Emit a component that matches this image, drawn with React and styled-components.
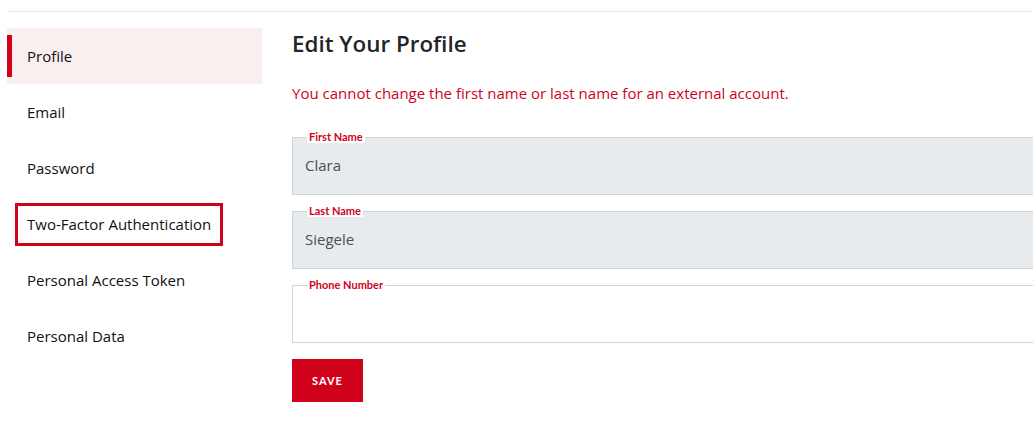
import styled, { createGlobalStyle } from "styled-components";

const GlobalStyle = createGlobalStyle`
  html, body {
    margin: 0;
    padding: 0;
    background: #fff;
    overflow: hidden;
  }
  body {
    font-family: "Open Sans", "Noto Sans", sans-serif;
    color: #212529;
  }
`;

const Page = styled.div`
  padding: 11px 0 0 7px;
`;

const Layout = styled.div`
  border-top: 1px solid #e5e5e5;
  padding-top: 16px;
  display: flex;
  gap: 30px;
`;

const Sidebar = styled.nav`
  width: 255px;
  flex-shrink: 0;
  display: flex;
  flex-direction: column;
`;

const NavItem = styled.a`
  position: relative;
  display: flex;
  align-items: center;
  height: 56px;
  padding-left: 20px;
  font-size: 15px;
  color: #111;
  text-decoration: none;
  background: ${(p) => (p.$active ? "#f9efee" : "transparent")};

  &::before {
    content: "";
    display: ${(p) => (p.$active ? "block" : "none")};
    position: absolute;
    left: 0;
    top: 7px;
    bottom: 7px;
    width: 5px;
    background: #d0021b;
  }
`;

const Focus = styled.span`
  margin-left: -12px;
  padding: 8px 9px 9px 9px;
  border: 3px solid #d0021b;
  line-height: 20px;
`;

const Main = styled.main`
  flex: 1;
  min-width: 0;
`;

const Title = styled.h1`
  margin: 1px 0 0;
  font-size: 22.4px;
  font-weight: 600;
  line-height: 30px;
  color: #212529;
`;

const Notice = styled.p`
  margin: 24px 0 28px;
  font-size: 15px;
  line-height: 20px;
  color: #d0021b;
`;

const Form = styled.form`
  width: 780px;
`;

const Field = styled.fieldset`
  margin: 0 0 10px;
  padding: 0 12px 7px;
  border: 1px solid #ced4da;
  background: ${(p) => (p.$disabled ? "#e8ebee" : "#fff")};
`;

const Legend = styled.legend`
  padding: 0 2px;
  margin-left: 2px;
  font-family: Lato, sans-serif;
  font-weight: 700;
  font-size: 11px;
  line-height: 12px;
  color: #d0021b;
  background: #fff;
`;

const Input = styled.input`
  display: block;
  width: 100%;
  height: 44px;
  border: 0;
  padding: 0;
  background: transparent;
  font-family: "Open Sans", "Noto Sans", sans-serif;
  font-size: 15px;
  color: #495057;
  outline: none;
`;

const SaveButton = styled.button`
  margin-top: 6px;
  width: 71px;
  height: 43px;
  border: 0;
  background: #d0021b;
  color: #fff;
  font-family: Lato, sans-serif;
  font-weight: 700;
  font-size: 11px;
  letter-spacing: 1px;
  cursor: pointer;
`;

const navItems = [
  "Profile",
  "Email",
  "Password",
  "Two-Factor Authentication",
  "Personal Access Token",
  "Personal Data",
];

const fields = [
  { label: "First Name", value: "Clara", disabled: true },
  { label: "Last Name", value: "Siegele", disabled: true },
  { label: "Phone Number", value: "", disabled: false },
];

export default function App() {
  return (
    <Page>
      <GlobalStyle />
      <Layout>
        <Sidebar>
          {navItems.map((item, i) => (
            <NavItem key={item} href="#" $active={i === 0}>
              {i === 3 ? <Focus>{item}</Focus> : item}
            </NavItem>
          ))}
        </Sidebar>
        <Main>
          <Title>Edit Your Profile</Title>
          <Notice>
            You cannot change the first name or last name for an external
            account.
          </Notice>
          <Form onSubmit={(e) => e.preventDefault()}>
            {fields.map((f) => (
              <Field key={f.label} $disabled={f.disabled}>
                <Legend>{f.label}</Legend>
                <Input
                  defaultValue={f.value}
                  disabled={f.disabled}
                  aria-label={f.label}
                />
              </Field>
            ))}
            <SaveButton type="submit">SAVE</SaveButton>
          </Form>
        </Main>
      </Layout>
    </Page>
  );
}
